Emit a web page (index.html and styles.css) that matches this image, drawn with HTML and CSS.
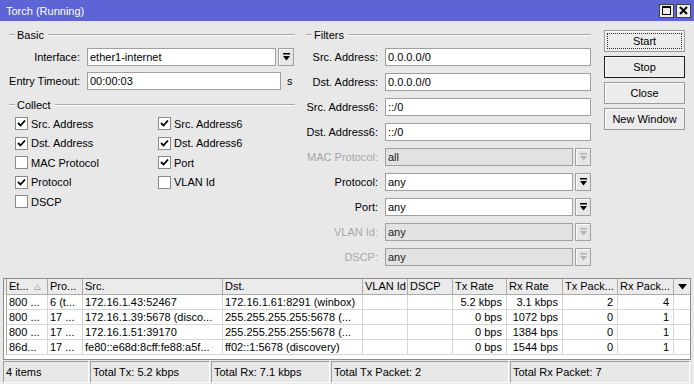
FILE: index.html
```html
<!DOCTYPE html>
<html>
<head>
<meta charset="utf-8">
<link rel="stylesheet" href="styles.css">
</head>
<body>
<div class="win">
  <div class="titlebar">
    <span class="title">Torch (Running)</span>
    <div class="wbtns">
      <span class="wbtn"><svg width="9" height="9" viewBox="0 0 9 9"><rect x="0.5" y="0.5" width="8" height="8" fill="none" stroke="#000"/><rect x="0" y="0" width="9" height="2" fill="#000"/></svg></span>
      <span class="wbtn"><svg width="9" height="9" viewBox="0 0 9 9"><path d="M1 1 L8 8 M8 1 L1 8" stroke="#000" stroke-width="2"/></svg></span>
    </div>
  </div>

  <div class="top">
    <div class="col-left">
      <div class="legend">Basic</div>
      <div class="form basic">
        <label>Interface:</label>
        <div class="field dd-field">
          <div class="input">ether1-internet</div>
          <div class="dd"><svg width="7" height="8" viewBox="0 0 7 8"><rect x="0" y="0" width="7" height="1.5" fill="#000"/><polygon points="0,3 7,3 3.5,7.5" fill="#000"/></svg></div>
        </div>
        <label>Entry Timeout:</label>
        <div class="field">
          <div class="input timeout">00:00:03</div>
          <span class="unit">s</span>
        </div>
      </div>

      <div class="legend collect">Collect</div>
      <div class="checks">
        <div class="check"><span class="box"><svg width="11" height="11" viewBox="0 0 11 11"><polyline points="2,5 4.5,7.5 9,2.5" fill="none" stroke="#000" stroke-width="1.8"/></svg></span>Src. Address</div>
        <div class="check"><span class="box"><svg width="11" height="11" viewBox="0 0 11 11"><polyline points="2,5 4.5,7.5 9,2.5" fill="none" stroke="#000" stroke-width="1.8"/></svg></span>Src. Address6</div>
        <div class="check"><span class="box"><svg width="11" height="11" viewBox="0 0 11 11"><polyline points="2,5 4.5,7.5 9,2.5" fill="none" stroke="#000" stroke-width="1.8"/></svg></span>Dst. Address</div>
        <div class="check"><span class="box"><svg width="11" height="11" viewBox="0 0 11 11"><polyline points="2,5 4.5,7.5 9,2.5" fill="none" stroke="#000" stroke-width="1.8"/></svg></span>Dst. Address6</div>
        <div class="check"><span class="box"></span>MAC Protocol</div>
        <div class="check"><span class="box"><svg width="11" height="11" viewBox="0 0 11 11"><polyline points="2,5 4.5,7.5 9,2.5" fill="none" stroke="#000" stroke-width="1.8"/></svg></span>Port</div>
        <div class="check"><span class="box"><svg width="11" height="11" viewBox="0 0 11 11"><polyline points="2,5 4.5,7.5 9,2.5" fill="none" stroke="#000" stroke-width="1.8"/></svg></span>Protocol</div>
        <div class="check"><span class="box"></span>VLAN Id</div>
        <div class="check"><span class="box"></span>DSCP</div>
      </div>
    </div>

    <div class="col-filters">
      <div class="legend">Filters</div>
      <div class="form filters">
        <label>Src. Address:</label>
        <div class="field"><div class="input">0.0.0.0/0</div></div>
        <label>Dst. Address:</label>
        <div class="field"><div class="input">0.0.0.0/0</div></div>
        <label>Src. Address6:</label>
        <div class="field"><div class="input">::/0</div></div>
        <label>Dst. Address6:</label>
        <div class="field"><div class="input">::/0</div></div>
        <label class="disabled">MAC Protocol:</label>
        <div class="field"><div class="input off">all</div><div class="dd"><svg width="7" height="8" viewBox="0 0 7 8"><rect x="0" y="0" width="7" height="1.5" fill="#b4b4b4"/><polygon points="0,3 7,3 3.5,7.5" fill="#b4b4b4"/></svg></div></div>
        <label>Protocol:</label>
        <div class="field"><div class="input">any</div><div class="dd"><svg width="7" height="8" viewBox="0 0 7 8"><rect x="0" y="0" width="7" height="1.5" fill="#000"/><polygon points="0,3 7,3 3.5,7.5" fill="#000"/></svg></div></div>
        <label>Port:</label>
        <div class="field"><div class="input">any</div><div class="dd"><svg width="7" height="8" viewBox="0 0 7 8"><rect x="0" y="0" width="7" height="1.5" fill="#000"/><polygon points="0,3 7,3 3.5,7.5" fill="#000"/></svg></div></div>
        <label class="disabled">VLAN Id:</label>
        <div class="field"><div class="input off">any</div><div class="dd"><svg width="7" height="8" viewBox="0 0 7 8"><rect x="0" y="0" width="7" height="1.5" fill="#b4b4b4"/><polygon points="0,3 7,3 3.5,7.5" fill="#b4b4b4"/></svg></div></div>
        <label class="disabled">DSCP:</label>
        <div class="field"><div class="input off">any</div><div class="dd"><svg width="7" height="8" viewBox="0 0 7 8"><rect x="0" y="0" width="7" height="1.5" fill="#b4b4b4"/><polygon points="0,3 7,3 3.5,7.5" fill="#b4b4b4"/></svg></div></div>
      </div>
    </div>

    <div class="buttons">
      <div class="btn focus">Start</div>
      <div class="btn default">Stop</div>
      <div class="btn">Close</div>
      <div class="btn">New Window</div>
    </div>
  </div>

  <div class="table">
    <div class="thead">
      <div class="c strip"></div>
      <div class="c">Et...<svg class="sort" width="7" height="6" viewBox="0 0 7 6"><polygon points="3.5,0.5 6.5,5.5 0.5,5.5" fill="none" stroke="#b8b8b8"/></svg></div>
      <div class="c">Pro...</div>
      <div class="c">Src.</div>
      <div class="c">Dst.</div>
      <div class="c">VLAN Id</div>
      <div class="c">DSCP</div>
      <div class="c">Tx Rate</div>
      <div class="c">Rx Rate</div>
      <div class="c">Tx Pack...</div>
      <div class="c">Rx Pack...</div>
      <div class="c menu"><svg width="9" height="6" viewBox="0 0 9 6"><polygon points="0,0 9,0 4.5,5.5" fill="#000"/></svg></div>
    </div>
    <div class="row">
      <div class="c strip"></div><div class="c">800 ...</div><div class="c">6 (t...</div><div class="c">172.16.1.43:52467</div><div class="c">172.16.1.61:8291 (winbox)</div><div class="c"></div><div class="c"></div><div class="c r">5.2 kbps</div><div class="c r">3.1 kbps</div><div class="c r">2</div><div class="c r">4</div><div class="c end"></div>
    </div>
    <div class="row">
      <div class="c strip"></div><div class="c">800 ...</div><div class="c">17 ...</div><div class="c">172.16.1.39:5678 (disco...</div><div class="c">255.255.255.255:5678 (...</div><div class="c"></div><div class="c"></div><div class="c r">0 bps</div><div class="c r">1072 bps</div><div class="c r">0</div><div class="c r">1</div><div class="c end"></div>
    </div>
    <div class="row">
      <div class="c strip"></div><div class="c">800 ...</div><div class="c">17 ...</div><div class="c">172.16.1.51:39170</div><div class="c">255.255.255.255:5678 (...</div><div class="c"></div><div class="c"></div><div class="c r">0 bps</div><div class="c r">1384 bps</div><div class="c r">0</div><div class="c r">1</div><div class="c end"></div>
    </div>
    <div class="row">
      <div class="c strip"></div><div class="c">86d...</div><div class="c">17 ...</div><div class="c">fe80::e68d:8cff:fe88:a5f...</div><div class="c">ff02::1:5678 (discovery)</div><div class="c"></div><div class="c"></div><div class="c r">0 bps</div><div class="c r">1544 bps</div><div class="c r">0</div><div class="c r">1</div><div class="c end"></div>
    </div>
  </div>

  <div class="status">
    <div class="seg s1">4 items</div>
    <div class="seg s2">Total Tx: 5.2 kbps</div>
    <div class="seg s3">Total Rx: 7.1 kbps</div>
    <div class="seg s4">Total Tx Packet: 2</div>
    <div class="seg s5">Total Rx Packet: 7</div>
  </div>
</div>
</body>
</html>
```

FILE: styles.css
```css
* { box-sizing: border-box; }
html, body { margin: 0; padding: 0; }
body {
  width: 694px;
  height: 384px;
  overflow: hidden;
  font-family: "Liberation Sans", Arial, sans-serif;
  font-size: 11px;
  color: #000;
  background: #e8e8e8;
}
.win { display: flex; flex-direction: column; height: 384px; }

.titlebar {
  flex: none;
  height: 21px;
  background: #5c64d6;
  color: #fff;
  display: flex;
  align-items: center;
  padding: 0 3px 0 6px;
}
.title { flex: 1; }
.wbtns { display: flex; gap: 2px; }
.wbtn {
  width: 15px;
  height: 14px;
  background: #ececec;
  border: 1px solid #404040;
  display: flex;
  align-items: center;
  justify-content: center;
}

.top { flex: none; height: 257px; display: flex; padding-top: 7px; }
.col-left { width: 297px; }
.col-filters { width: 296px; }

.legend {
  display: flex;
  align-items: center;
  height: 14px;
  padding-left: 9px;
  margin-right: 2px;
  white-space: nowrap;
}
.legend::before {
  content: "";
  width: 6px;
  border-top: 1px solid #a8a8a8;
  border-bottom: 1px solid #fff;
  margin-right: 2px;
}
.legend::after {
  content: "";
  flex: 1;
  border-top: 1px solid #a8a8a8;
  border-bottom: 1px solid #fff;
  margin-left: 4px;
}
.legend.collect { margin-top: 8px; }

.form {
  display: grid;
  column-gap: 7px;
  margin-top: 6px;
}
.form.basic { grid-template-columns: 80px 1fr; row-gap: 6px; }
.form.filters { grid-template-columns: 81px 1fr; row-gap: 7px; margin-right: 2px; }
.form label {
  text-align: right;
  line-height: 18px;
  white-space: nowrap;
}
.form label.disabled { color: #a8a8a8; }

.field { display: flex; height: 18px; align-items: stretch; }
.dd-field { margin-right: 3px; }
.input {
  flex: 1;
  background: #fff;
  border: 1px solid #a0a0a0;
  padding: 0 2px;
  line-height: 16px;
  white-space: nowrap;
  overflow: hidden;
}
.input.off { background: #e2e2e2; color: #202020; }
.input.timeout { flex: none; width: 194px; }
.unit { margin-left: 6px; line-height: 18px; }
.dd {
  flex: none;
  width: 16px;
  margin-left: 2px;
  border: 1px solid #a0a0a0;
  background: #e6e6e6;
  box-shadow: inset 1px 1px #fafafa;
  display: flex;
  align-items: center;
  justify-content: center;
}

.checks {
  display: grid;
  grid-template-columns: 143px 1fr;
  grid-auto-rows: 19.5px;
  padding-left: 15px;
  margin-top: 2px;
}
.check { display: flex; align-items: center; gap: 3px; white-space: nowrap; }
.box {
  flex: none;
  width: 13px;
  height: 13px;
  border: 1px solid #8a8a8a;
  background: #fff;
  display: flex;
  align-items: center;
  justify-content: center;
}

.buttons {
  margin-left: 11px;
  padding-top: 2px;
  display: flex;
  flex-direction: column;
  gap: 4px;
}
.btn {
  width: 81px;
  height: 22px;
  border: 1px solid #9c9c9c;
  background: #ececec;
  box-shadow: inset 1px 1px #fbfbfb;
  text-align: center;
  line-height: 20px;
}
.btn.default { border-color: #202020; }
.btn.focus { outline: 1px dotted #333; outline-offset: -4px; }

.table {
  flex: none;
  margin-left: 3px;
  width: 688px;
  height: 82px;
  border: 1px solid #8c8c8c;
  background: #fff;
}
.thead, .row {
  display: grid;
  grid-template-columns: 3px 41px 35px 140px 140px 45px 45px 54px 56px 55px 56px 16px;
}
.thead { height: 16px; background: #ebebeb; }
.row { height: 15px; }
.c {
  border-right: 1px solid #d6d6d6;
  border-bottom: 1px solid #d6d6d6;
  padding: 0 2px;
  white-space: nowrap;
  overflow: hidden;
  line-height: 14px;
}
.thead .c { border-color: #ababab; line-height: 15px; }
.c.strip { padding: 0; background: #fff; border-right-color: #a8a8a8; border-bottom: none; }
.thead .c.strip { background: #ebebeb; }
.c.r { text-align: right; padding-right: 4px; }
.c.end { border-right: none; }
.c.menu { border-right: none; display: flex; align-items: center; justify-content: center; }
.sort { margin-left: 5px; vertical-align: 0; }

.status {
  flex: none;
  margin-top: 1px;
  margin-left: 3px;
  height: 22px;
  display: flex;
  gap: 1px;
}
.seg {
  height: 22px;
  border: 1px solid;
  border-color: #a0a0a0 #fff #fff #a0a0a0;
  padding-left: 2px;
  line-height: 20px;
  white-space: nowrap;
}
.s1 { width: 86px; }
.s2 { width: 120px; }
.s3 { width: 119px; }
.s4 { width: 178px; }
.s5 { width: 180px; }
```
